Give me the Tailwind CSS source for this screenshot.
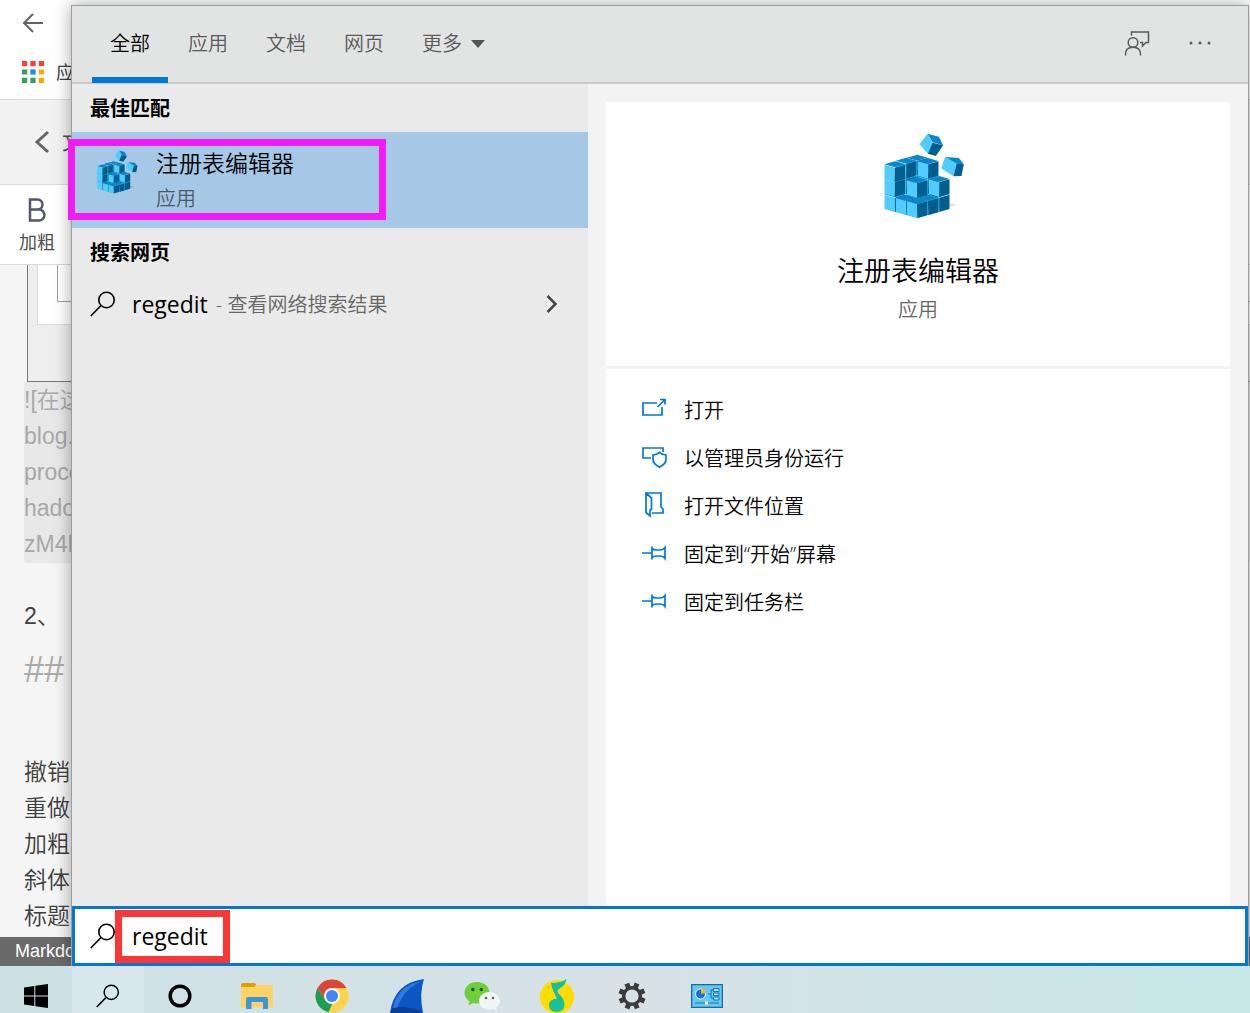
<!DOCTYPE html>
<html lang="zh-CN">
<head>
    <meta charset="UTF-8">
    <meta name="viewport" content="width=device-width, initial-scale=1.0">
    <title>搜索</title>
    <script src="https://cdn.jsdelivr.net/npm/@tailwindcss/browser@4"></script>
</head>
<body class="h-screen flex flex-col overflow-hidden bg-[#f5f5f5] font-['Open_Sans','Noto_Sans_CJK_SC',sans-serif] text-black">
    <!-- Shared icons -->
    <svg class="hidden">
        <defs>
            <g id="cube">
                <path d="M-31-9 0-18 31-9 0 0z" fill="#0a86cd"/>
                <path d="M-31-8 0 1V44L-31 35z" fill="#50cdfc"/>
                <path d="M0 1 31-8V35L0 44z" fill="#025e8c"/>
            </g>
            <symbol id="regedit" viewBox="74 36 242 258">
                <path d="M250 268 292 250 262 246z" fill="#000" opacity=".12"/>
                <g>
                    <use href="#cube" x="173" y="210"/><use href="#cube" x="140" y="220"/><use href="#cube" x="206" y="220"/>
                    <use href="#cube" x="106" y="229"/><use href="#cube" x="173" y="229"/><use href="#cube" x="239" y="229"/>
                    <use href="#cube" x="140" y="239"/><use href="#cube" x="206" y="239"/><use href="#cube" x="173" y="248"/>
                </g>
                <g>
                    <use href="#cube" x="173" y="164"/><use href="#cube" x="140" y="174"/><use href="#cube" x="206" y="174"/>
                    <use href="#cube" x="106" y="183"/><use href="#cube" x="173" y="186"/><use href="#cube" x="239" y="183"/>
                </g>
                <g>
                    <use href="#cube" x="173" y="119"/><use href="#cube" x="140" y="128"/><use href="#cube" x="206" y="129"/>
                    <use href="#cube" x="106" y="139"/>
                </g>
                <path d="M204 38 238 47 251 73 219 64z" fill="#0a86cd"/>
                <path d="M204 38 219 65 205 98 180 70z" fill="#50cdfc"/>
                <path d="M219 65 251 73 229 105 205 98z" fill="#025e8c"/>
                <path d="M257 108 298 111 313 130 290 128z" fill="#0a86cd"/>
                <path d="M257 108 291 128 282 166 245 142z" fill="#50cdfc"/>
                <path d="M291 128 313 130 306 165 282 166z" fill="#025e8c"/>
            </symbol>
            <symbol id="magnifier" viewBox="0 0 26 26">
                <circle cx="16.500" cy="9" r="7.700" fill="none" stroke="currentColor" stroke-width="1.600"/>
                <path d="M11 14.500.8 25" fill="none" stroke="currentColor" stroke-width="1.600"/>
            </symbol>
            <symbol id="pin" viewBox="0 0 26 26">
                <path d="M0 13h10M10 6.500v13M10 8.500q2 1.500 4 1.500h4q3 0 5-2.500v11Q21 16 18 16h-4q-2 0-4 1.500" fill="none" stroke="currentColor" stroke-width="1.700"/>
            </symbol>
        </defs>
    </svg>

    <div class="relative flex-1 min-h-0">
        <!-- Page behind the search window -->
        <div class="h-full flex flex-col overflow-hidden whitespace-nowrap">
            <div class="h-[100px] shrink-0 bg-white border-b border-[#dadada] pl-[22px]">
                <svg class="w-6 h-6 mt-[11px]" viewBox="0 0 24 24" fill="none" stroke="#5f6368" stroke-width="2"><path d="M21 12H3M11 3 2 12l9 9"/></svg>
                <div class="flex items-center gap-3 mt-[23px]">
                    <svg class="w-[22px] h-[22px]" viewBox="0 0 21 21">
                        <path d="M0 0h5v5H0zM8 0h5v5H8zM16 0h5v5h-5z" fill="#f44336"/>
                        <path d="M0 8h5v5H0zM0 16h5v5H0zM8 16h5v5H8z" fill="#34a058"/>
                        <path d="M8 8h5v5H8z" fill="#1e88f5"/>
                        <path d="M16 8h5v5h-5zM16 16h5v5h-5z" fill="#f9ab00"/>
                    </svg>
                    <a href="#" class="text-[18px] leading-7 text-[#3c4043]">应用</a>
                </div>
            </div>
            <div class="h-[85px] shrink-0 bg-[#f2f2f2] border-b border-[#dadada] flex items-center gap-3 pl-[34px]">
                <svg class="w-4 h-6" viewBox="0 0 16 24" fill="none" stroke="#666" stroke-width="3"><path d="M14 2 3 12l11 10"/></svg>
                <a href="#" class="text-[21px] text-[#555]">文章管理</a>
            </div>
            <div class="h-[80px] shrink-0 bg-white border-b border-[#dadada] pl-[19px]">
                <button class="flex flex-col items-center">
                    <svg class="w-[18px] h-6 mt-[13px]" viewBox="0 0 18 24" fill="none" stroke="#55566b" stroke-width="2.500"><path d="M2 1.500h7.500a5 5 0 0 1 0 10H2zM2 11.500h9a5.500 5.500 0 0 1 0 11H2z"/></svg>
                    <span class="text-[18px] leading-6 mt-2 text-[#4f4f4f]">加粗</span>
                </button>
            </div>
            <div class="flex-1 min-h-0 overflow-hidden pl-6 font-['Liberation_Sans','Noto_Sans_CJK_SC',sans-serif] text-[23px] leading-9 font-[350] text-[#3f3f3f]">
                <div class="h-[117px] ml-[3px] pl-[9px] border-l border-b border-[#777] bg-[#eee]">
                    <div class="h-[60px] pl-[19px] bg-white border-l border-b border-[#dcdcdc]">
                        <div class="h-[37px] border-l border-b border-[#a0a0a8]"></div>
                    </div>
                </div>
                <p class="h-[181px] bg-[#e8e8e8] rounded-b text-[#a9a9a9]">![在这里插入图片描述](https://img-<br>blog.csdnimg.cn/20200301.png?x-oss-<br>process=image/watermark,type_ZmFuZ3poZW5naGVpdGk,<br>hadow_10,text_aHR0cHM6<br>zM4Njg1,size_16</p>
                <p class="mt-[35px]">2、</p>
                <h2 class="mt-[18px] text-[36px] text-[#aaa]">##</h2>
                <p class="mt-[66px]">撤销<br>重做<br>加粗<br>斜体<br>标题</p>
            </div>
            <div class="h-[29px] shrink-0 bg-[#6a6a6a] pl-[15px] font-['Liberation_Sans',sans-serif] text-[18px] leading-[28px] text-white">Markdown</div>
        </div>

        <!-- Search window -->
        <main class="absolute top-[5px] bottom-0 left-[71px] right-px flex flex-col border border-b-0 border-[#9d9d9d] shadow-[0_0_16px_rgba(0,0,0,0.35)]">
            <header class="h-[78px] shrink-0 flex items-stretch justify-between bg-[#e2e3e3] border-b-2 border-[#c9caca] pl-5 pr-9">
                <nav class="flex gap-[2px] -mb-px text-[20px] font-[350] text-[#5a5a5a]">
                    <button class="px-[18px] pt-[5px] border-b-[6px] border-[#0078d7] text-black">全部</button>
                    <button class="px-[18px] pt-[5px] border-b-[6px] border-transparent">应用</button>
                    <button class="px-[18px] pt-[5px] border-b-[6px] border-transparent">文档</button>
                    <button class="px-[18px] pt-[5px] border-b-[6px] border-transparent">网页</button>
                    <button class="flex items-center gap-[9px] px-[18px] pt-[5px] border-b-[6px] border-transparent">更多
                        <svg class="w-[14px] h-2" viewBox="0 0 14 8" fill="#555"><path d="M0 0h14L7 8z"/></svg>
                    </button>
                </nav>
                <div class="flex items-center gap-[38px] pb-[2px] text-[#5a5a5a]">
                    <button aria-label="反馈">
                        <svg class="w-[26px] h-[26px]" viewBox="0 0 26 26" fill="none" stroke="currentColor" stroke-width="1.500">
                            <circle cx="9" cy="12.500" r="4.800"/>
                            <path d="M1.500 25.500v-1q0-7.200 7.500-7.200t7.500 7.200v1M7.500 5.500V2h17v10.500H22L18.500 16v-3.500H16"/>
                        </svg>
                    </button>
                    <button aria-label="选项">
                        <svg class="w-6 h-6" viewBox="0 0 24 24" fill="currentColor"><circle cx="3" cy="12" r="1.500"/><circle cx="12" cy="12" r="1.500"/><circle cx="21" cy="12" r="1.500"/></svg>
                    </button>
                </div>
            </header>

            <div class="flex-1 min-h-0 flex">
                <section class="w-[516px] shrink-0 bg-[#eaeaea]">
                    <h2 class="h-12 pl-[18px] text-[20px] leading-[50px] font-bold">最佳匹配</h2>
                    <div class="relative">
                        <a href="#" class="h-24 flex items-start bg-[#a5c8e6] pl-[25px] pt-[15px]">
                            <svg class="w-[41px] h-[44px] mt-[3px]"><use href="#regedit"/></svg>
                            <span class="ml-[18px] flex flex-col">
                                <span class="text-[23px] leading-[32px] font-[350]">注册表编辑器</span>
                                <span class="mt-1 text-[20px] leading-[32px] font-[350] text-[#4d5a66]">应用</span>
                            </span>
                        </a>
                        <div class="absolute top-[7px] -left-1 w-[318px] h-[81px] border-[7px] border-[#f51af5] pointer-events-none"></div>
                    </div>
                    <h2 class="h-12 pl-[18px] text-[20px] leading-[50px] font-bold">搜索网页</h2>
                    <a href="#" class="h-14 flex items-center pl-[18px] pr-[30px]">
                        <svg class="w-[26px] h-[26px]"><use href="#magnifier"/></svg>
                        <span class="ml-4 text-[23px]">regedit</span>
                        <span class="ml-2 pt-[2px] text-[20px] font-[350] text-[#666]">- 查看网络搜索结果</span>
                        <svg class="w-3 h-[18px] ml-auto" viewBox="0 0 12 18" fill="none" stroke="#444" stroke-width="2.500"><path d="m1.500 1 8 8-8 8"/></svg>
                    </a>
                </section>

                <section class="flex-1 min-w-0 flex flex-col gap-[3px] px-[18px] pt-[18px] bg-[#f3f3f3]">
                    <div class="h-[264px] shrink-0 flex flex-col items-center bg-white pt-[31px]">
                        <svg class="w-[81px] h-[86px] ml-3"><use href="#regedit"/></svg>
                        <h1 class="mt-8 text-[27px] leading-10 font-[350]">注册表编辑器</h1>
                        <p class="mt-1 text-[20px] leading-[30px] font-[350] text-[#666]">应用</p>
                    </div>
                    <ul class="flex-1 bg-white pt-[18px] pl-9 text-[20px] font-[350] [&_svg]:text-[#0078d7] [&_svg]:w-[26px] [&_svg]:h-[26px] [&_svg]:-mt-[4px]">
                        <li><a href="#" class="h-12 flex items-center gap-4">
                            <svg viewBox="0 0 26 26" fill="none" stroke="currentColor" stroke-width="1.700"><path d="M15 7H1v12h19v-8M15.500 11 23 3.500M18 3.500h5v5"/></svg>打开</a></li>
                        <li><a href="#" class="h-12 flex items-center gap-4">
                            <svg viewBox="0 0 26 26" fill="none" stroke="currentColor" stroke-width="1.700"><path d="M9 14H1V4h20v4M11 11q4-.2 6.500-2.700Q20 10.800 24 11v4q0 5-6.500 8.200Q11 20 11 15z"/></svg>以管理员身份运行</a></li>
                        <li><a href="#" class="h-12 flex items-center gap-4">
                            <svg viewBox="0 0 26 26" fill="none" stroke="currentColor" stroke-width="1.700"><path d="M4 1h15v14l2 2v4H10M4 1l5.500 5v11L8 18v6l-4-3.500z"/></svg>打开文件位置</a></li>
                        <li><a href="#" class="h-12 flex items-center gap-4"><svg><use href="#pin"/></svg>固定到“开始”屏幕</a></li>
                        <li><a href="#" class="h-12 flex items-center gap-4"><svg><use href="#pin"/></svg>固定到任务栏</a></li>
                    </ul>
                </section>
            </div>

            <form class="relative h-[60px] shrink-0 flex items-center bg-white border-[3px] border-[#0078d7] pl-[15px]">
                <label for="query" aria-label="搜索"><svg class="w-[26px] h-[26px]"><use href="#magnifier"/></svg></label>
                <input id="query" type="text" value="regedit" class="ml-4 flex-1 text-[23px] outline-none">
                <div class="absolute top-px left-10 w-[115px] h-[53px] border-[7px] border-[#fc3535] pointer-events-none"></div>
            </form>
        </main>
    </div>

    <!-- Taskbar -->
    <footer class="relative h-[47px] shrink-0 overflow-hidden bg-linear-to-r from-[#cbe1e6] via-[#d8e2e6] to-[#c8e8e8]">
        <div class="flex h-[60px] [&>button]:flex [&>button]:items-center [&>button]:justify-center [&>button]:w-[75px]">
            <div class="flex mr-[3px] [&>button]:flex [&>button]:items-center [&>button]:justify-center [&>button]:w-[72px]">
                <button aria-label="开始">
                    <svg class="w-6 h-6" viewBox="0 0 24 24"><path d="M0 3.400 10.300 2v9.500H0zM11.300 1.800 24 0v11.500H11.300zM0 12.500h10.300V22L0 20.600zM11.300 12.500H24V24l-12.700-1.800z"/></svg>
                </button>
                <button aria-label="搜索" class="bg-white/20"><svg class="w-6 h-6"><use href="#magnifier"/></svg></button>
                <button aria-label="Cortana">
                    <svg class="w-6 h-6" viewBox="0 0 24 24" fill="none" stroke="#000" stroke-width="3.500"><circle cx="12" cy="12" r="9.800"/></svg>
                </button>
            </div>
            <button aria-label="文件资源管理器">
                <svg class="w-8 h-8" viewBox="0 0 32 32">
                    <path d="M0 4.500q0-1.500 1.500-1.500H13q2 0 2 2v3H0z" fill="#e0a100"/>
                    <path d="M0 7h13l2-2h15.500Q32 5 32 6.500V26q0 1.500-1.500 1.500h-29Q0 27.500 0 26z" fill="#ffd264"/>
                    <path d="M5 19q0-2 2-2h18q2 0 2 2v10h-5v-7H10.500v7H5z" fill="#3a96dd"/>
                </svg>
            </button>
            <button aria-label="Chrome">
                <svg class="w-[34px] h-[34px]" viewBox="0 0 34 34">
                    <circle cx="17" cy="17" r="16.500" fill="#fdd448"/>
                    <path d="M2.700 8.800A16.500 16.500 0 0 1 31.500 9H17L9.500 20z" fill="#db4437"/>
                    <path d="M2.700 8.800 10 21l7 4.500-3.500 7.700A16.500 16.500 0 0 1 2.700 8.800z" fill="#1b9d58"/>
                    <circle cx="17" cy="17" r="8" fill="#f4f6f8"/>
                    <circle cx="17" cy="17" r="6" fill="#4285f4"/>
                </svg>
            </button>
            <button aria-label="Wireshark">
                <svg class="w-[34px] h-[34px]" viewBox="0 0 34 34">
                    <path d="M0 34Q4 4 34 0q-5 14-1 34z" fill="#0b55c4"/>
                    <path d="M3 29Q8 6 31 2.500 14 10 7 29z" fill="#2f7ae0"/>
                    <path d="M0 34q1-3 3-5 13-2 16 0 8 0 14 5z" fill="#0a3f94"/>
                </svg>
            </button>
            <button aria-label="微信">
                <svg class="w-9 h-[30px]" viewBox="0 0 36 30">
                    <path d="M13 1C5.500 1 .5 5.800.5 12c0 3.500 2 6.500 5 8.500L4.500 24.500 9 22q2 .5 4 .5c7.500 0 12.500-4.500 12.500-10.500S20.500 1 13 1z" fill="#6fce3b"/>
                    <path d="M25.500 11C19.500 11 15 15 15 20s4.500 8.700 10.500 8.700q2 0 3.600-.6l4 1.600-1-3.500c2.500-1.500 3.900-3.700 3.900-6.200 0-5-4.500-9-10.500-9z" fill="#f3f4f4"/>
                    <g fill="#1e5a16"><circle cx="8.800" cy="8.500" r="1.700"/><circle cx="17.300" cy="8.500" r="1.700"/></g>
                    <g fill="#666"><circle cx="22" cy="17" r="1.300"/><circle cx="29" cy="17" r="1.300"/></g>
                </svg>
            </button>
            <button aria-label="QQ音乐">
                <svg class="w-9 h-9" viewBox="0 0 36 36">
                    <circle cx="18" cy="19" r="17" fill="#ffdc00"/>
                    <path d="M12 5Q22 5 27.500 1 26 8 20.500 10.500 18 12 19 15q7 6 6.500 12-.5 7-8 7-7.500 0-7.500-6.500 0-6.500 8-7Q13 12 12 5z" fill="#17c09c"/>
                </svg>
            </button>
            <button aria-label="设置">
                <svg class="w-7 h-7" viewBox="-14 -14 28 28" fill="none" stroke="#3b3b3d">
                    <circle r="8.300" stroke-width="3.500"/>
                    <path d="M0-9v-4.500M0 9v4.500M-9 0h-4.500M9 0h4.500M-6.500-6.500l-3-3M6.500 6.500l3 3M-6.500 6.500l-3 3M6.500-6.500l3-3" stroke-width="5" transform="rotate(22)"/>
                </svg>
            </button>
            <button aria-label="控制面板">
                <svg class="w-8 h-6" viewBox="0 0 32 24">
                    <rect x=".5" y=".5" width="31" height="23" fill="#48b1e8" stroke="#1f6891"/>
                    <rect x="2" y="2" width="28" height="20" fill="#65c8f4"/>
                    <circle cx="9.500" cy="10" r="5" fill="#1876c8" stroke="#eaf7ff"/>
                    <path d="M10 9.500V4.500a5 5 0 0 1 5 5z" fill="#ffb12b"/>
                    <path d="M17 10h3V6h3M20 10v4h3M4 19h24" fill="none" stroke="#1876a8"/>
                    <path d="M22.500 4.500H28v3h-5.500zM22.500 9H28v2.500h-5.500zM22.500 13H28v3h-5.500z" fill="#a5e0fa" stroke="#1876a8"/>
                    <path d="M14 17.500h3v3h-3z" fill="#fff"/>
                </svg>
            </button>
        </div>
    </footer>
</body>
</html>
